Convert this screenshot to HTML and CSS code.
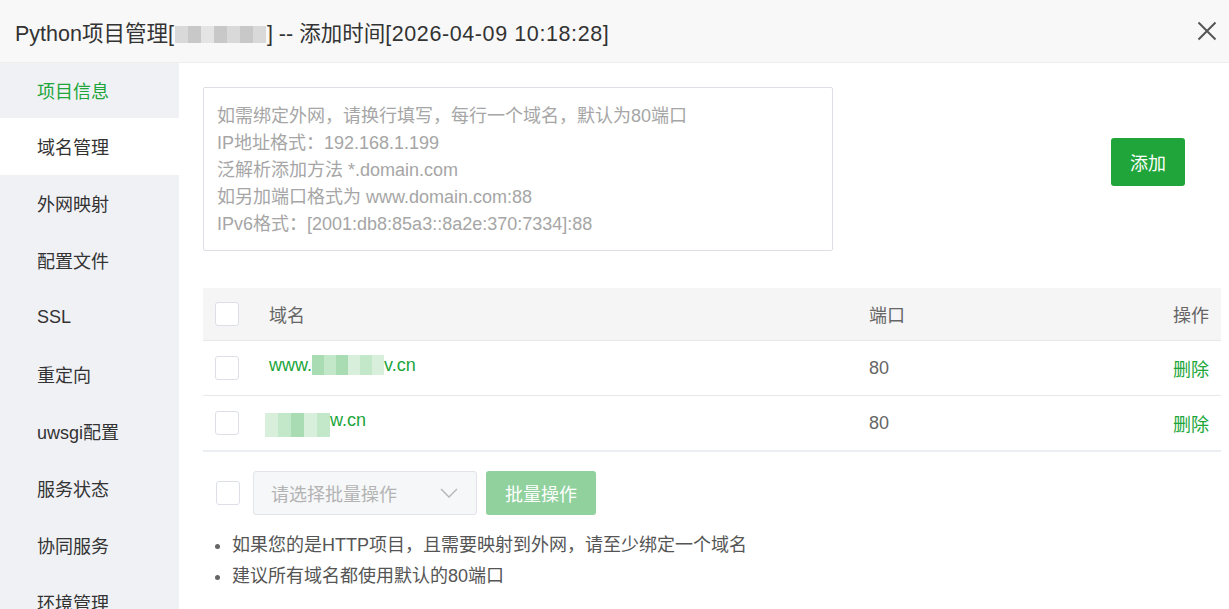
FILE: index.html
```html
<!DOCTYPE html>
<html lang="zh-CN">
<head>
<meta charset="utf-8">
<title>Python项目管理</title>
<link rel="stylesheet" href="styles.css">
</head>
<body>
<div class="dialog">
  <header class="dlg-head">
    <div class="dlg-title">Python项目管理[<span class="blur-title"><i></i><i></i><i></i><i></i><i></i><i></i><i></i></span>] -- 添加时间<span class="date">[2026-04-09 10:18:28]</span></div>
    <button class="dlg-close" aria-label="关闭">
      <svg width="20" height="20" viewBox="0 0 20 20"><path d="M1.5 1.5 L18.5 18.5 M18.5 1.5 L1.5 18.5" stroke="#555" stroke-width="2" fill="none"/></svg>
    </button>
  </header>
  <div class="dlg-body">
    <nav class="side">
      <div class="side-item first green">项目信息</div>
      <div class="side-item active">域名管理</div>
      <div class="side-item">外网映射</div>
      <div class="side-item">配置文件</div>
      <div class="side-item">SSL</div>
      <div class="side-item">重定向</div>
      <div class="side-item">uwsgi配置</div>
      <div class="side-item">服务状态</div>
      <div class="side-item">协同服务</div>
      <div class="side-item">环境管理</div>
    </nav>
    <main class="content">
      <div class="add-row">
        <div class="domain-input">
          <div class="ph">如需绑定外网，请换行填写，每行一个域名，默认为80端口</div>
          <div class="ph">IP地址格式：192.168.1.199</div>
          <div class="ph">泛解析添加方法 *.domain.com</div>
          <div class="ph">如另加端口格式为 www.domain.com:88</div>
          <div class="ph">IPv6格式：[2001:db8:85a3::8a2e:370:7334]:88</div>
        </div>
        <button class="btn-add">添加</button>
      </div>

      <div class="table">
        <div class="tr thead">
          <div class="td c-chk"><span class="chk"></span></div>
          <div class="td c-name">域名</div>
          <div class="td c-port">端口</div>
          <div class="td c-op">操作</div>
        </div>
        <div class="tr">
          <div class="td c-chk"><span class="chk"></span></div>
          <div class="td c-name"><span class="link">www.<span class="blur w1"><i class="a"></i><i class="b"></i><i class="a"></i><i class="c"></i><i class="b"></i><i class="c"></i></span>v.cn</span></div>
          <div class="td c-port">80</div>
          <div class="td c-op"><span class="link">删除</span></div>
        </div>
        <div class="tr last">
          <div class="td c-chk"><span class="chk"></span></div>
          <div class="td c-name"><span class="link"><span class="blur w2"><i class="c"></i><i class="b"></i><i class="a"></i><i class="c"></i><i class="b"></i></span>w.cn</span></div>
          <div class="td c-port">80</div>
          <div class="td c-op"><span class="link">删除</span></div>
        </div>
      </div>

      <div class="batch">
        <span class="chk"></span>
        <div class="select">
          <span>请选择批量操作</span>
          <svg width="18" height="10" viewBox="0 0 18 10"><path d="M1 1 L9 9 L17 1" stroke="#b5b5b5" stroke-width="1.4" fill="none"/></svg>
        </div>
        <button class="btn-batch">批量操作</button>
      </div>

      <ul class="tips">
        <li>如果您的是HTTP项目，且需要映射到外网，请至少绑定一个域名</li>
        <li>建议所有域名都使用默认的80端口</li>
      </ul>
    </main>
  </div>
</div>
</body>
</html>
```

FILE: styles.css
```css
* { box-sizing: border-box; }
html, body { margin: 0; padding: 0; }
body {
  width: 1229px;
  height: 609px;
  overflow: hidden;
  background: #fff;
  font-family: "Liberation Sans", "Noto Sans CJK SC", sans-serif;
  color: #333;
}
.dialog { width: 1229px; height: 609px; display: flex; flex-direction: column; }

.dlg-head {
  height: 63px;
  flex: none;
  background: #f8f8f8;
  border-bottom: 1px solid #eee;
  display: flex;
  align-items: center;
  justify-content: space-between;
  padding: 0 12px 0 15px;
}
.dlg-title { font-size: 21.5px; color: #333; letter-spacing: 0; }
.dlg-title .date { letter-spacing: 0.6px; }
.blur-title { display: inline-flex; vertical-align: -2px; height: 17px; margin: 0 1px; }
.blur-title i { display: block; width: 13px; height: 17px; background: #d9d9d9; }
.blur-title i:nth-child(2n) { background: #c8c8c8; }
.blur-title i:nth-child(3) { background: #e4e4e4; }
.dlg-close { border: 0; background: none; padding: 0; width: 20px; height: 20px; cursor: pointer; }

.dlg-body { flex: 1; display: flex; min-height: 0; }

.side {
  width: 179px;
  flex: none;
  background: #f0f1f5;
  overflow: hidden;
}
.side-item {
  height: 57px;
  display: flex;
  align-items: center;
  padding-left: 37px;
  padding-bottom: 1px;
  font-size: 18px;
  color: #333;
}
.side-item.first { height: 55px; padding-bottom: 2px; }
.side-item.green { color: #20a53a; }
.side-item.active { background: #fff; }

.content { flex: 1; padding: 24px 8px 0 24px; min-width: 0; }

.add-row { display: flex; justify-content: space-between; }
.domain-input {
  width: 630px;
  height: 164px;
  border: 1px solid #dcdfe6;
  border-radius: 2px;
  padding: 15px 13px;
}
.ph { font-size: 18px; line-height: 27px; color: #a6a6a6; white-space: nowrap; }
.btn-add {
  margin-top: 51px;
  margin-right: 36px;
  width: 74px;
  height: 48px;
  border: 0;
  border-radius: 3px;
  background: #20a53a;
  color: #fff;
  font-family: inherit;
  font-size: 18px;
  align-self: flex-start;
}

.table { margin-top: 37px; border-bottom: 2px solid #ebeef3; }
.tr { display: flex; align-items: center; height: 55px; border-bottom: 1px solid #e8e8ec; font-size: 18px; }
.tr.last { border-bottom: 0; height: 54px; }
.tr.thead { height: 53px; background: #f5f5f5; color: #666; }
.td { display: flex; align-items: center; }
.c-chk { width: 66px; padding-left: 12px; }
.c-name { width: 600px; }
.c-port { flex: 1; color: #666; }
.c-op { padding-right: 12px; }
.chk { display: inline-block; width: 24px; height: 24px; border: 1px solid #dcdfe6; border-radius: 3px; background: #fff; }
.link { color: #20a53a; display: inline-flex; align-items: center; }
.tr .c-name .link { margin-top: -6px; }
.blur { display: inline-flex; height: 20px; }
.blur i { display: block; height: 20px; }
.blur.w1 i { width: 12px; }
.blur.w2 { margin-left: -4px; margin-top: 10px; height: 24px; }
.blur.w2 i { width: 13px; height: 24px; }
.blur i.a { background: #a9dcb3; }
.blur i.b { background: #c2e7c9; }
.blur i.c { background: #d8efdc; }

.batch { display: flex; align-items: center; margin-top: 19px; height: 44px; }
.batch .chk { margin-left: 13px; }
.select {
  margin-left: 13px;
  width: 224px;
  height: 44px;
  background: #f6f7f9;
  border: 1px solid #e2e4e9;
  border-radius: 3px;
  display: flex;
  align-items: center;
  justify-content: space-between;
  padding: 0 18px 0 17px;
  font-size: 18px;
  color: #b3b3b3;
}
.btn-batch {
  margin-left: 9px;
  width: 110px;
  height: 44px;
  border: 0;
  border-radius: 3px;
  background: #90d19e;
  color: #fff;
  font-family: inherit;
  font-size: 18px;
}

.tips { margin: 15px 0 0; padding: 0 0 0 29px; font-size: 18px; color: #555; }
.tips li { line-height: 31px; }
.tips li::marker { color: #666; }
```
